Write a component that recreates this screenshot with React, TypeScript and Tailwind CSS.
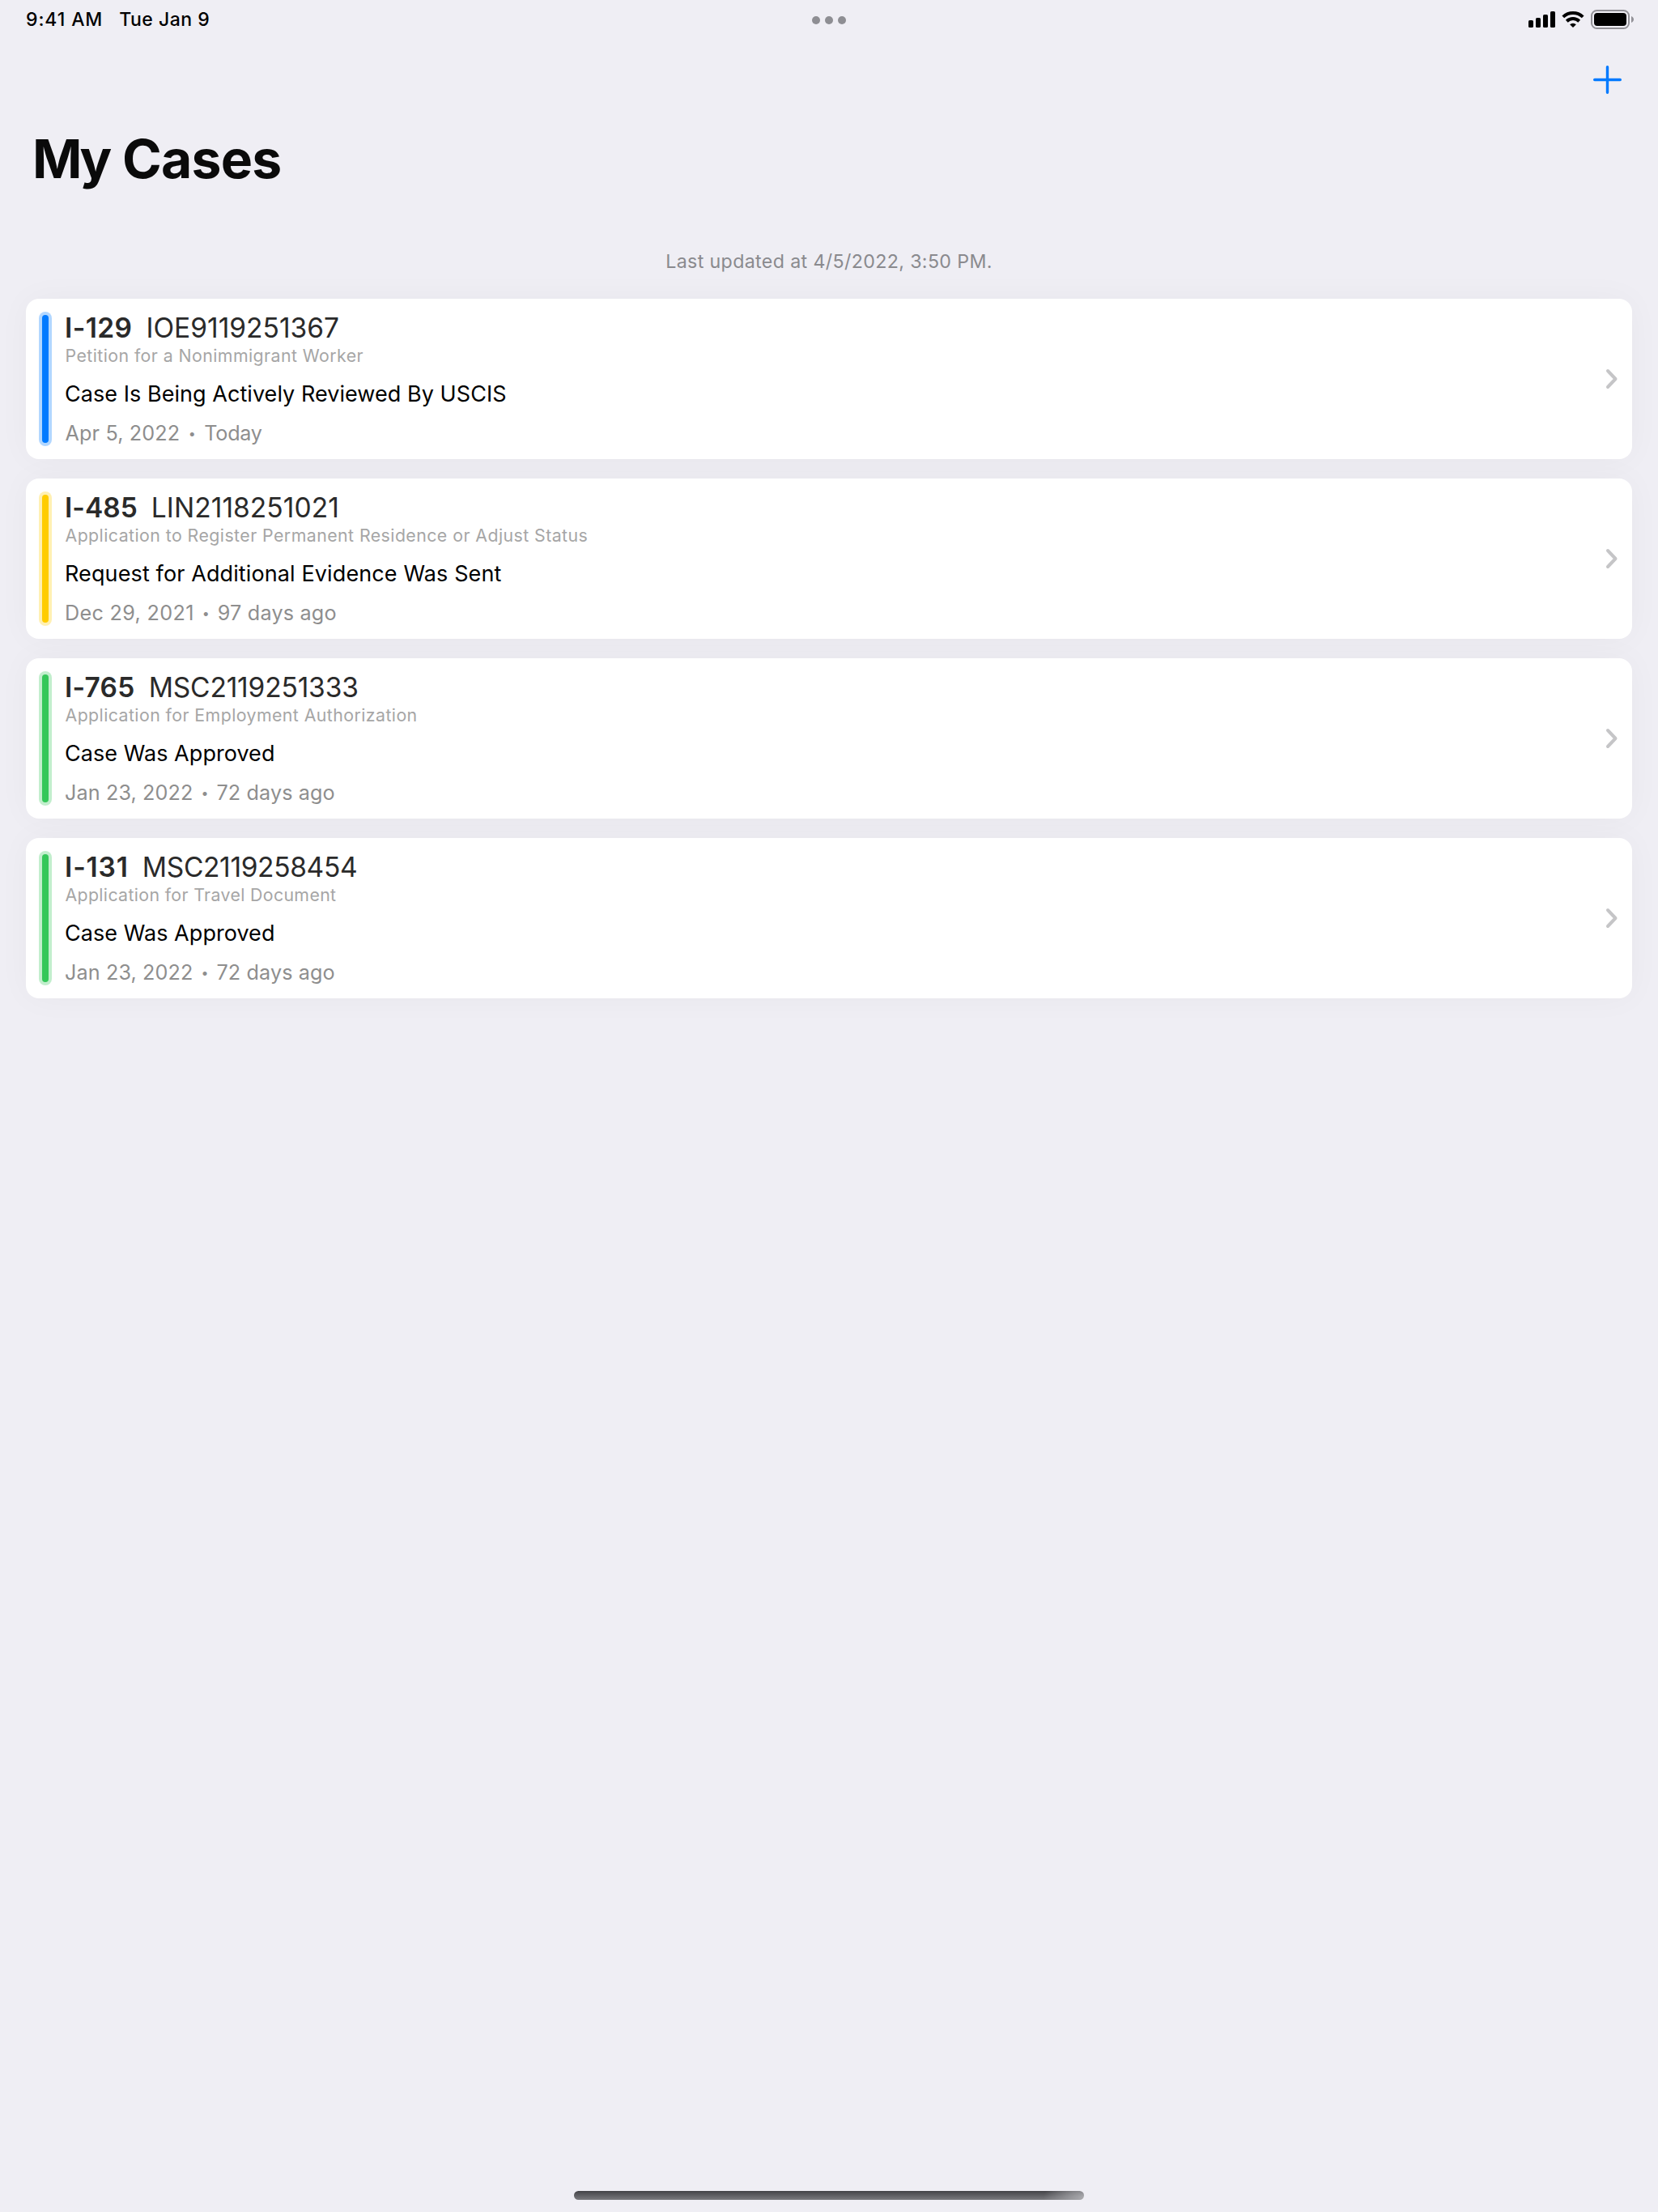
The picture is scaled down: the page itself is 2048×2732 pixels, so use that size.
type Case = {
  form: string;
  formClass: string;
  receipt: string;
  receiptClass: string;
  title: string;
  titleClass: string;
  status: string;
  statusClass: string;
  date: string;
  dateClass: string;
  dotClass: string;
  ago: string;
  agoClass: string;
  bar: string;
  halo: string;
};

const cases: Case[] = [
  {
    form: "I-129",
    formClass: "tracking-[0.42px]",
    receipt: "IOE9119251367",
    receiptClass: "tracking-[0.014px]",
    title: "Petition for a Nonimmigrant Worker",
    titleClass: "tracking-[0.435px]",
    status: "Case Is Being Actively Reviewed By USCIS",
    statusClass: "tracking-[0.048px]",
    date: "Apr 5, 2022",
    dateClass: "pl-[0.5px] tracking-[0.14px]",
    dotClass: "w-[30px]",
    ago: "Today",
    agoClass: "tracking-[-0.3px]",
    bar: "bg-[#007aff]",
    halo: "bg-[#b2d7ff]",
  },
  {
    form: "I-485",
    formClass: "tracking-[0.02px]",
    receipt: "LIN2118251021",
    receiptClass: "tracking-[0.07px]",
    title: "Application to Register Permanent Residence or Adjust Status",
    titleClass: "tracking-[0.445px]",
    status: "Request for Additional Evidence Was Sent",
    statusClass: "tracking-[0.115px]",
    date: "Dec 29, 2021",
    dateClass: "tracking-[0.32px]",
    dotClass: "w-[29px]",
    ago: "97 days ago",
    agoClass: "tracking-[0.2px]",
    bar: "bg-[#ffcc00]",
    halo: "bg-[#fff0b3]",
  },
  {
    form: "I-765",
    formClass: "tracking-[0.28px]",
    receipt: "MSC2119251333",
    receiptClass: "tracking-[-0.166px]",
    title: "Application for Employment Authorization",
    titleClass: "tracking-[0.432px]",
    status: "Case Was Approved",
    statusClass: "tracking-[0.046px]",
    date: "Jan 23, 2022",
    dateClass: "tracking-[0.11px]",
    dotClass: "w-[29px]",
    ago: "72 days ago",
    agoClass: "tracking-[0.1px]",
    bar: "bg-[#34c759]",
    halo: "bg-[#c2eecd]",
  },
  {
    form: "I-131",
    formClass: "tracking-[0.86px]",
    receipt: "MSC2119258454",
    receiptClass: "tracking-[-0.342px]",
    title: "Application for Travel Document",
    titleClass: "tracking-[0.36px]",
    status: "Case Was Approved",
    statusClass: "tracking-[0.046px]",
    date: "Jan 23, 2022",
    dateClass: "tracking-[0.11px]",
    dotClass: "w-[29px]",
    ago: "72 days ago",
    agoClass: "tracking-[0.1px]",
    bar: "bg-[#34c759]",
    halo: "bg-[#c2eecd]",
  },
];

function StatusIcons() {
  return (
    <svg width="132" height="28" viewBox="1887 10 132 28" fill="none">
      <g fill="#000">
        <rect x="1888" y="25" width="6" height="9" rx="1.6" />
        <rect x="1897" y="22" width="6" height="12" rx="1.6" />
        <rect x="1906" y="18" width="6" height="16" rx="1.6" />
        <rect x="1915" y="14" width="6" height="20" rx="1.6" />
      </g>
      <g stroke="#000" strokeWidth="4">
        <path d="M1930.8 20.9a17.6 17.6 0 0 1 24.4 0" />
        <path d="M1935.3 26.2a11 11 0 0 1 15.4 0" />
      </g>
      <path d="M1943 34l-3.9-3.7a5.6 5.6 0 0 1 7.8 0z" fill="#000" />
      <rect x="1966" y="13" width="46" height="22" rx="6.5" stroke="#929197" strokeWidth="2" />
      <rect x="1969" y="16" width="40" height="16" rx="4" fill="#000" />
      <path d="M2015 20c2 .8 3 2.300 3 4s-1 3.200-3 4z" fill="#929197" />
    </svg>
  );
}

function CaseCard({ item }: { item: Case }) {
  return (
    <article className="flex h-[198px] rounded-2xl bg-white py-4 pr-[17px] pl-4 shadow-[0_0_40px_rgba(0,0,0,0.035)]">
      <div className={`flex h-[166px] w-4 justify-center rounded-full py-1 ${item.halo}`}>
        <div className={`w-2 rounded-full ${item.bar}`} />
      </div>
      <div className="ml-4 flex-1 whitespace-nowrap">
        <div className="flex gap-[17px] text-[33.5px] leading-[40px] text-[#2a2a2a]">
          <span className={`font-semibold ${item.formClass}`}>{item.form}</span>
          <span className={item.receiptClass}>{item.receipt}</span>
        </div>
        <div className={`pl-[0.5px] text-[21.3px] leading-[28px] text-[#a6a6a6] ${item.titleClass}`}>{item.title}</div>
        <div className={`mt-4 text-[27px] leading-[36px] text-black ${item.statusClass}`}>{item.status}</div>
        <div className="mt-3.5 flex text-[25.2px] leading-[32px] text-[#8e8e8e]">
          <span className={item.dateClass}>{item.date}</span>
          <span className={`text-center text-[16px] ${item.dotClass}`}>•</span>
          <span className={item.agoClass}>{item.ago}</span>
        </div>
      </div>
      <svg className="self-center" width="16" height="26" viewBox="0 0 16 26" fill="none">
        <path d="M3 3l9.500 10-9.500 10" stroke="#c5c5c7" strokeWidth="4" strokeLinecap="round" strokeLinejoin="round" />
      </svg>
    </article>
  );
}

export default function App() {
  return (
    <div className="flex h-[2732px] w-[2048px] flex-col overflow-hidden bg-[#efeef4] font-['Inter',sans-serif]">
      <header className="flex h-12 items-center pr-[29px] pl-8 text-black">
        <div className="flex w-[971px] gap-5 text-[23px] leading-[47px] font-medium">
          <span className="tracking-[0.9px]">9:41 AM</span>
          <span className="tracking-[0.49px]">Tue Jan 9</span>
        </div>
        <div className="flex gap-1.5 pt-0.5">
          <span className="size-2.5 rounded-full bg-[#8e8e93]" />
          <span className="size-2.5 rounded-full bg-[#8e8e93]" />
          <span className="size-2.5 rounded-full bg-[#8e8e93]" />
        </div>
        <div className="ml-auto">
          <StatusIcons />
        </div>
      </header>
      <nav className="flex h-[108px] justify-end pt-8 pr-[44px]">
        <button className="size-[37px]" aria-label="Add case">
          <svg width="37" height="37" viewBox="0 0 37 37" stroke="#007aff" strokeWidth="3.4" strokeLinecap="round">
            <path d="M18.500 2.700v31.600M2.700 18.500h31.600" />
          </svg>
        </button>
      </nav>
      <h1 className="pl-10 text-[66px] leading-[80px] font-bold tracking-[-0.8px] text-[#0a0a0a] [word-spacing:1.5px]">
        <span className="tracking-[-3.6px]">My</span> Cases
      </h1>
      <p className="mt-[71px] mb-[30px] text-center text-[23.2px] leading-[32px] tracking-[0.37px] text-[#8a8a8e]">
        Last updated at 4/5/2022, 3:50 PM.
      </p>
      <main className="flex flex-col gap-6 px-8">
        {cases.map((item) => (
          <CaseCard key={item.form} item={item} />
        ))}
      </main>
      <footer className="mt-auto flex justify-center pb-[15px]">
        <div className="h-[11px] w-[630px] rounded-full bg-[radial-gradient(50px_26px_at_100%_80%,#aaaaae,transparent),linear-gradient(#434347,#7a7a7e)]" />
      </footer>
    </div>
  );
}
